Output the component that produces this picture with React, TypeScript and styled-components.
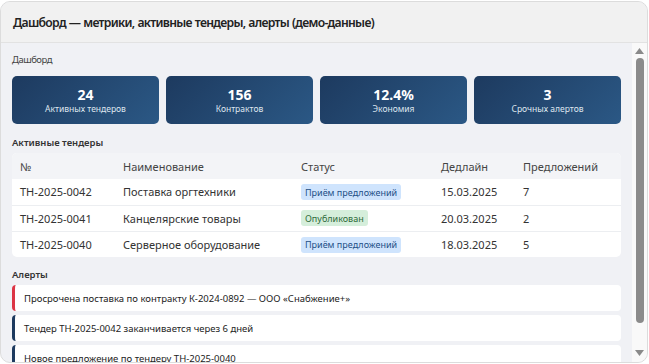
import React from 'react'
import styled, { createGlobalStyle } from 'styled-components'

const Global = createGlobalStyle`
  html, body { margin: 0; padding: 0; background: #ffffff; }
  body { font-family: 'Noto Sans', 'Open Sans', sans-serif; }
  * { box-sizing: border-box; }
`

const metrics = [
  { value: '24', label: 'Активных тендеров' },
  { value: '156', label: 'Контрактов' },
  { value: '12.4%', label: 'Экономия' },
  { value: '3', label: 'Срочных алертов' },
]

type Tender = { id: string; name: string; status: 'open' | 'published'; deadline: string; bids: number }

const tenders: Tender[] = [
  { id: 'ТН-2025-0042', name: 'Поставка оргтехники', status: 'open', deadline: '15.03.2025', bids: 7 },
  { id: 'ТН-2025-0041', name: 'Канцелярские товары', status: 'published', deadline: '20.03.2025', bids: 2 },
  { id: 'ТН-2025-0040', name: 'Серверное оборудование', status: 'open', deadline: '18.03.2025', bids: 5 },
]

const alerts = [
  { text: 'Просрочена поставка по контракту К-2024-0892 — ООО «Снабжение+»', urgent: true },
  { text: 'Тендер ТН-2025-0042 заканчивается через 6 дней', urgent: false },
  { text: 'Новое предложение по тендеру ТН-2025-0040', urgent: false },
]

const Arrow = ({ down }: { down?: boolean }) => (
  <svg width="9" height="6" viewBox="0 0 9 6">
    <polygon points={down ? '0,0 9,0 4.5,6' : '0,6 9,6 4.5,0'} fill="#8a8a8a" />
  </svg>
)

export default function App() {
  return (
    <>
      <Global />
      <S.Window>
        <S.Header>Дашборд — метрики, активные тендеры, алерты (демо-данные)</S.Header>
        <S.Body>
          <S.Content>
            <S.PageTitle>Дашборд</S.PageTitle>
            <S.Metrics>
              {metrics.map(m => (
                <S.Metric key={m.label}>
                  <S.MetricValue>{m.value}</S.MetricValue>
                  <S.MetricLabel>{m.label}</S.MetricLabel>
                </S.Metric>
              ))}
            </S.Metrics>

            <S.Section>Активные тендеры</S.Section>
            <S.Table>
              <thead>
                <tr>
                  <S.Th>№</S.Th>
                  <S.Th>Наименование</S.Th>
                  <S.Th>Статус</S.Th>
                  <S.Th>Дедлайн</S.Th>
                  <S.Th>Предложений</S.Th>
                </tr>
              </thead>
              <tbody>
                {tenders.map(t => (
                  <tr key={t.id}>
                    <S.Td>{t.id}</S.Td>
                    <S.Td>{t.name}</S.Td>
                    <S.Td>
                      <S.Badge $kind={t.status}>
                        {t.status === 'open' ? 'Приём предложений' : 'Опубликован'}
                      </S.Badge>
                    </S.Td>
                    <S.Td>{t.deadline}</S.Td>
                    <S.Td>{t.bids}</S.Td>
                  </tr>
                ))}
              </tbody>
            </S.Table>

            <S.Section $gap={11}>Алерты</S.Section>
            <S.Alerts>
              {alerts.map(a => (
                <S.Alert key={a.text} $urgent={a.urgent}>{a.text}</S.Alert>
              ))}
            </S.Alerts>
          </S.Content>
          <S.Scrollbar>
            <Arrow />
            <S.Thumb />
            <Arrow down />
          </S.Scrollbar>
        </S.Body>
      </S.Window>
    </>
  )
}

export const S = {
  Window: styled.div`
    width: 648px;
    height: 362px;
    margin-top: 1px;
    border: 1px solid #dcdcdc;
    border-radius: 10px;
    overflow: hidden;
    display: flex;
    flex-direction: column;
    background: #f0f1f5;
  `,
  Header: styled.div`
    flex: 0 0 41px;
    display: flex;
    align-items: center;
    padding: 0 12px;
    background: #f1f1f1;
    border-bottom: 1px solid #e2e2e2;
    font-size: 12.2px;
    font-weight: 600;
    letter-spacing: -0.7px;
    word-spacing: 0.5px;
    color: #222;
  `,
  Body: styled.div`
    flex: 1;
    min-height: 0;
    display: flex;
  `,
  Content: styled.div`
    flex: 1;
    min-width: 0;
    overflow: hidden;
    padding: 10px 11px 12px;
    color: #333;
  `,
  Scrollbar: styled.div`
    flex: 0 0 15px;
    background: #f9f9f9;
    display: flex;
    flex-direction: column;
    align-items: center;
    padding: 5px 0 6px;
    gap: 4px;
  `,
  Thumb: styled.div`
    width: 8px;
    height: 265px;
    border-radius: 4px;
    background: #8b8b8b;
    margin-bottom: auto;
  `,
  PageTitle: styled.div`
    font-size: 9.5px;
    letter-spacing: -0.5px;
    line-height: 14px;
    color: #444;
    margin-bottom: 9px;
  `,
  Metrics: styled.div`
    display: grid;
    grid-template-columns: repeat(4, 1fr);
    gap: 7px;
  `,
  Metric: styled.div`
    height: 48px;
    border-radius: 5px;
    background: linear-gradient(135deg, #1d3a5f 0%, #2b5885 100%);
    color: #fff;
    display: flex;
    flex-direction: column;
    align-items: center;
    justify-content: center;
  `,
  MetricValue: styled.div`
    font-size: 14px;
    font-weight: 700;
    line-height: 17px;
  `,
  MetricLabel: styled.div`
    font-size: 8.5px;
    line-height: 12px;
    color: #dfe6ef;
  `,
  Section: styled.div<{ $gap?: number }>`
    font-size: 9.5px;
    font-weight: 600;
    line-height: 13px;
    color: #333;
    margin: ${p => p.$gap ?? 12}px 0 4px;
  `,
  Table: styled.table`
    width: 100%;
    border-collapse: collapse;
    background: #fff;
    border-radius: 5px;
    overflow: hidden;
    font-size: 11px;
    color: #333;
    tbody tr + tr td { border-top: 1px solid #eceef1; }
  `,
  Th: styled.th`
    background: #f3f4f7;
    font-weight: 400;
    color: #444;
    text-align: left;
    height: 26px;
    padding: 0 8px;
    &:nth-child(1) { width: 103px; }
    &:nth-child(2) { width: 178px; }
    &:nth-child(3) { width: 140px; }
    &:nth-child(4) { width: 82px; }
  `,
  Td: styled.td`
    height: 26px;
    padding: 0 8px;
  `,
  Badge: styled.span<{ $kind: 'open' | 'published' }>`
    display: inline-block;
    font-size: 9px;
    line-height: 13px;
    padding: 1.5px 4px;
    border-radius: 3px;
    background: ${p => (p.$kind === 'open' ? '#cfe4fd' : '#d5eedb')};
    color: ${p => (p.$kind === 'open' ? '#1d4f86' : '#2d6a3a')};
  `,
  Alerts: styled.div`
    display: flex;
    flex-direction: column;
    gap: 4px;
  `,
  Alert: styled.div<{ $urgent: boolean }>`
    height: 26px;
    display: flex;
    align-items: center;
    padding-left: 9px;
    background: #fff;
    border-radius: 4px;
    border-left: 3px solid ${p => (p.$urgent ? '#dc3545' : '#1d3a5f')};
    font-size: 9.5px;
    color: #222;
  `,
}
